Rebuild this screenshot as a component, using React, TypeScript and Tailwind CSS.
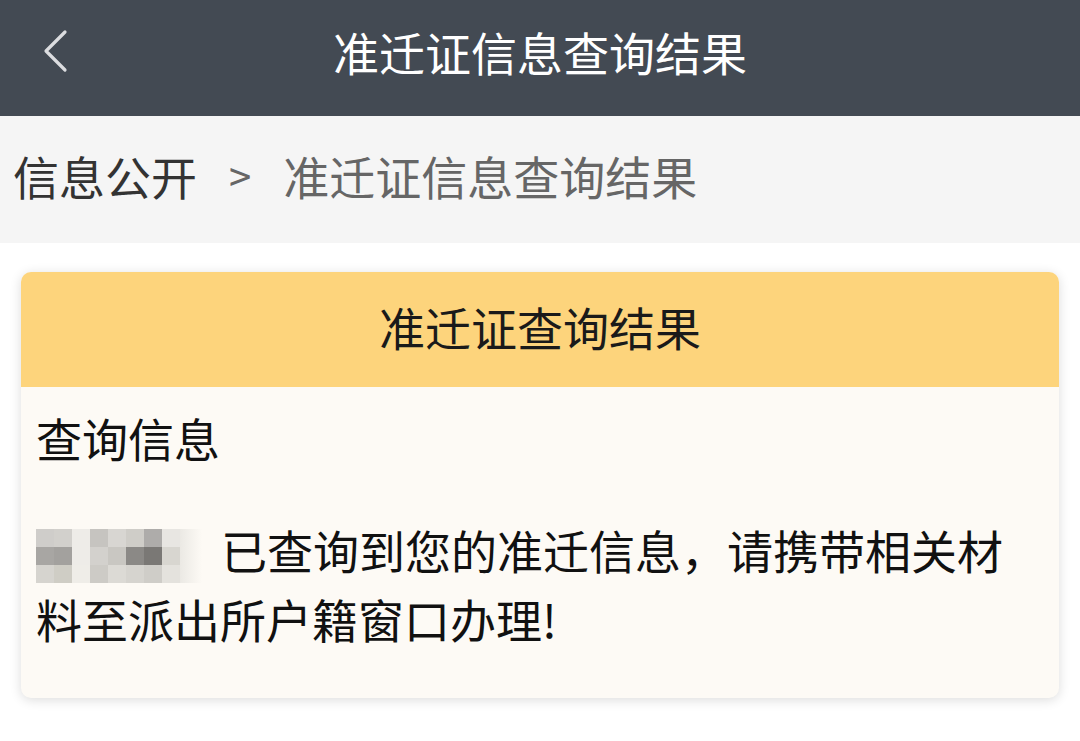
import React from "react";

const mosaic: string[][] = [
  ["#cfcdca", "#d2d0cc", "#eeece8", "#c6c4c0", "#d8d6d2", "#cfcdc8", "#aeacaa", "#e8e6e2"],
  ["#a8a6a3", "#a3a19e", "#eeece8", "#d3d1cd", "#c9c7c2", "#8b8986", "#7a7875", "#d8d6d0"],
  ["#d6d4cf", "#cfcdc5", "#efede8", "#cdcbc6", "#dcdad5", "#d6d4cf", "#cfcdc8", "#e4e2dd"],
];

function Mosaic() {
  return (
    <span className="inline-flex align-middle mr-[19px] relative top-[-1px]">
      <span className="grid grid-cols-[repeat(8,18px)] grid-rows-[repeat(3,18px)]">
        {mosaic.flat().map((c, i) => (
          <span key={i} style={{ backgroundColor: c }} className="block w-[18px] h-[18px] blur-[0.6px]" />
        ))}
      </span>
      <span className="block w-[22px] h-[54px] bg-gradient-to-r from-[#ebe9e4] to-transparent" />
    </span>
  );
}

export default function App() {
  return (
    <div
      className="w-[1080px] h-[741px] bg-white overflow-hidden"
      style={{ fontFamily: '"Noto Sans CJK SC", "Noto Sans", sans-serif' }}
    >
      <header className="h-[116px] pb-[14px] bg-[#434a53] grid grid-cols-[1fr_auto_1fr] items-center">
        <div className="pl-[42px] flex items-center">
          <svg width="28" height="46" viewBox="0 0 28 46" fill="none">
            <path d="M23 4 L4 23 L23 42" stroke="#dcdde0" strokeWidth="3.2" strokeLinecap="round" strokeLinejoin="round" />
          </svg>
        </div>
        <h1 className="text-[46px] leading-none text-white font-normal">准迁证信息查询结果</h1>
        <div />
      </header>

      <nav className="h-[127px] pb-[10px] bg-[#f5f5f5] flex items-center pl-[13px] text-[46px] leading-none">
        <span className="text-[#333333]">信息公开</span>
        <span className="text-[#666666] text-[40px] mx-[32px]">&gt;</span>
        <span className="text-[#666666]">准迁证信息查询结果</span>
      </nav>

      <section className="mt-[29px] mx-[21px] rounded-[10px] overflow-hidden bg-[#fdfaf5] shadow-[0_2px_12px_rgba(0,0,0,0.14)]">
        <div className="h-[115px] pb-[8px] bg-[#fdd47c] flex items-center justify-center">
          <h2 className="text-[46px] leading-none text-[#1a1a1a] font-normal">准迁证查询结果</h2>
        </div>
        <div className="pl-[15px] pr-[20px] pt-[16px] pb-[46px] text-[46px] leading-[68px] text-[#111111]">
          <p>查询信息</p>
          <p className="mt-[44px]">
            <Mosaic />
            已查询到您的准迁信息，请携带相关材
            <br />
            料至派出所户籍窗口办理!
          </p>
        </div>
      </section>
    </div>
  );
}
